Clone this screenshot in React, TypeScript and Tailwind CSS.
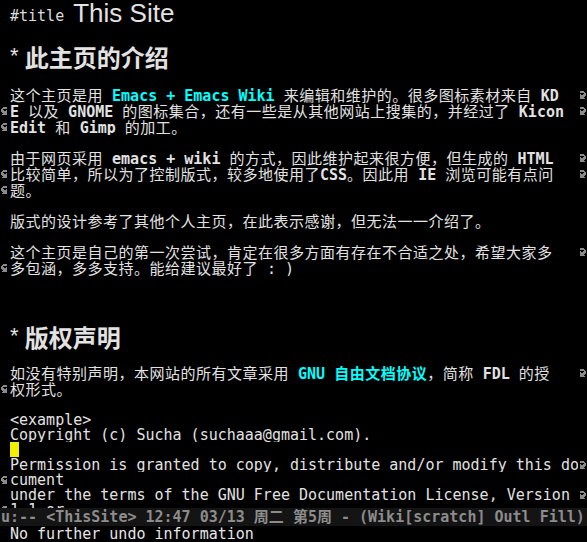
import React from "react";

const MONO = "font-['DejaVu_Sans_Mono','Noto_Sans_CJK_SC',monospace]";

function Bitmap({ rows, color }: { rows: number[]; color: string }) {
  const rects: React.ReactNode[] = [];
  rows.forEach((r, y) => {
    for (let x = 0; x < 8; x++) {
      if (r & (0x80 >> x)) rects.push(<rect key={`${x}-${y}`} x={x} y={y} width={1} height={1} fill={color} />);
    }
  });
  return (
    <svg width="8" height="8" viewBox="0 0 8 8" shapeRendering="crispEdges">
      {rects}
    </svg>
  );
}
function LeftArrow() {
  return <Bitmap rows={[0x3c, 0x7c, 0xc0, 0xe4, 0xfc, 0x7c, 0x3c, 0x7c]} color="#8a8a8a" />;
}
function RightArrow() {
  return <Bitmap rows={[0x3c, 0x3e, 0x03, 0x27, 0x3f, 0x3e, 0x3c, 0x3e]} color="#8a8a8a" />;
}

// wrap CJK runs so they get a touch of extra advance, as in the reference
function T(s: string): React.ReactNode[] {
  return s
    .split(/([\u3000-\u303f\u4e00-\u9fff\uff00-\uffef]+)/)
    .map((p, i) =>
      i % 2 ? (
        <span key={i} className="tracking-[0.5px] font-['Noto_Sans_CJK_SC',sans-serif]">
          {p}
        </span>
      ) : (
        <React.Fragment key={i}>{p}</React.Fragment>
      )
    );
}

function Line({
  h,
  left,
  right,
  children,
}: {
  h: string;
  left?: boolean;
  right?: boolean;
  children?: React.ReactNode;
}) {
  return (
    <div className={`flex ${h} items-center`}>
      <div className="w-[10px] h-full flex items-center pl-[1px] shrink-0">{left ? <LeftArrow /> : null}</div>
      <div className="w-[568px] h-full overflow-hidden whitespace-pre flex items-center shrink-0">
        <span>{children}</span>
      </div>
      <div className="w-[9px] h-full flex items-center shrink-0">{right ? <RightArrow /> : null}</div>
    </div>
  );
}

const C = ({ children }: { children: React.ReactNode }) => (
  <span className="text-[#00ffff] font-bold">{children}</span>
);
const B = ({ children }: { children: React.ReactNode }) => <b className="font-bold">{children}</b>;

export default function App() {
  return (
    <div className={`w-[587px] h-[542px] bg-black text-[#e2e2e2] ${MONO} text-[15px] flex flex-col overflow-hidden`}>
      <div className="h-[508px] shrink-0 overflow-hidden leading-[16px]">
        {/* title */}
        <div className="h-[31px] flex items-end pl-[10px] pb-[7px] whitespace-pre">
          <span className="text-[15px] leading-[15px] text-[#dcdcdc]">#title </span>
          <span className="font-['Liberation_Sans',sans-serif] text-[26px] leading-[28px] text-[#e2e2e2] relative top-[3px]">
            This Site
          </span>
        </div>
        {/* heading 1 */}
        <div className="h-[56px] flex items-center pl-[10px] whitespace-pre font-['Liberation_Sans','Noto_Sans_CJK_SC',sans-serif] text-[24px] leading-[30px]">
          <span>
            <span className="font-normal relative top-[-4px] text-[22px]">* </span>
            <span className="font-bold">此主页的介绍</span>
          </span>
        </div>

        <Line h="h-[16px]" right>
          {T("这个主页是用 ")}
          <C>Emacs + Emacs Wiki</C>
          {T(" 来编辑和维护的。很多图标素材来自 ")}
          <B>KD</B>
        </Line>
        <Line h="h-[16px]" left right>
          <B>E</B>
          {T(" 以及 ")}
          <B>GNOME</B>
          {T(" 的图标集合，还有一些是从其他网站上搜集的，并经过了 ")}
          <B>Kicon</B>
        </Line>
        <Line h="h-[16px]" left>
          <B>Edit</B>
          {T(" 和 ")}
          <B>Gimp</B>
          {T(" 的加工。")}
        </Line>
        <Line h="h-[15px]" />
        <Line h="h-[16px]" right>
          {T("由于网页采用 ")}
          <B>emacs + wiki</B>
          {T(" 的方式，因此维护起来很方便，但生成的 ")}
          <B>HTML</B>
        </Line>
        <Line h="h-[16px]" left right>
          {T("比较简单，所以为了控制版式，较多地使用了")}
          <B>CSS</B>
          {T("。因此用 ")}
          <B>IE</B>
          {T(" 浏览可能有点问")}
        </Line>
        <Line h="h-[16px]" left>
          {T("题。")}
        </Line>
        <Line h="h-[15px]" />
        <Line h="h-[16px]">{T("版式的设计参考了其他个人主页，在此表示感谢，但无法一一介绍了。")}</Line>
        <Line h="h-[15px]" />
        <Line h="h-[16px]" right>
          {T("这个主页是自己的第一次尝试，肯定在很多方面有存在不合适之处，希望大家多")}
        </Line>
        <Line h="h-[16px]" left>
          {T("多包涵，多多支持。能给建议最好了 ")}
          {": )"}
        </Line>

        <div className="h-[30px]" />
        {/* heading 2 */}
        <div className="h-[59px] pt-[7px] flex items-start pl-[10px] whitespace-pre font-['Liberation_Sans','Noto_Sans_CJK_SC',sans-serif] text-[24px] leading-[52px]">
          <span>
            <span className="font-normal relative top-[-4px] text-[22px]">* </span>
            <span className="font-bold">版权声明</span>
          </span>
        </div>

        <Line h="h-[16px]" right>
          {T("如没有特别声明，本网站的所有文章采用 ")}
          <C>
            GNU <span className="tracking-[0.5px] font-['Noto_Sans_CJK_SC',sans-serif]">自由文档协议</span>
          </C>
          {T("，简称 ")}
          <B>FDL</B>
          {T(" 的授")}
        </Line>
        <Line h="h-[16px]" left>
          {T("权形式。")}
        </Line>
        <Line h="h-[15px]" />
        <Line h="h-[15px]">&lt;example&gt;</Line>
        <Line h="h-[15px]">Copyright (c) Sucha (suchaaa@gmail.com).</Line>
        <div className="flex h-[15px]">
          <div className="w-[10px]" />
          <div className="w-[9px] h-[15px] bg-[#f0f000]" />
        </div>
        <Line h="h-[15px]" right>
          Permission is granted to copy, distribute and/or modify this do
        </Line>
        <Line h="h-[15px]" left>
          cument
        </Line>
        <Line h="h-[15px]" right>
          under the terms of the GNU Free Documentation License, Version
        </Line>
        <Line h="h-[15px]" left>
          1.1 or
        </Line>
      </div>
      {/* mode line */}
      <div className="h-[18px] shrink-0 bg-[#141414] text-[#8c8c8c] font-bold whitespace-pre flex items-center pl-[1px] leading-[18px] overflow-hidden">
        u:-- &lt;ThisSite&gt; 12:47 03/13 周二 第5周 - (Wiki[scratch] Outl Fill)
      </div>
      {/* echo area */}
      <div className="h-[16px] shrink-0 pl-[10px] whitespace-pre flex items-center text-[#e6e6e6] leading-[16px]">
        No further undo information
      </div>
    </div>
  );
}
